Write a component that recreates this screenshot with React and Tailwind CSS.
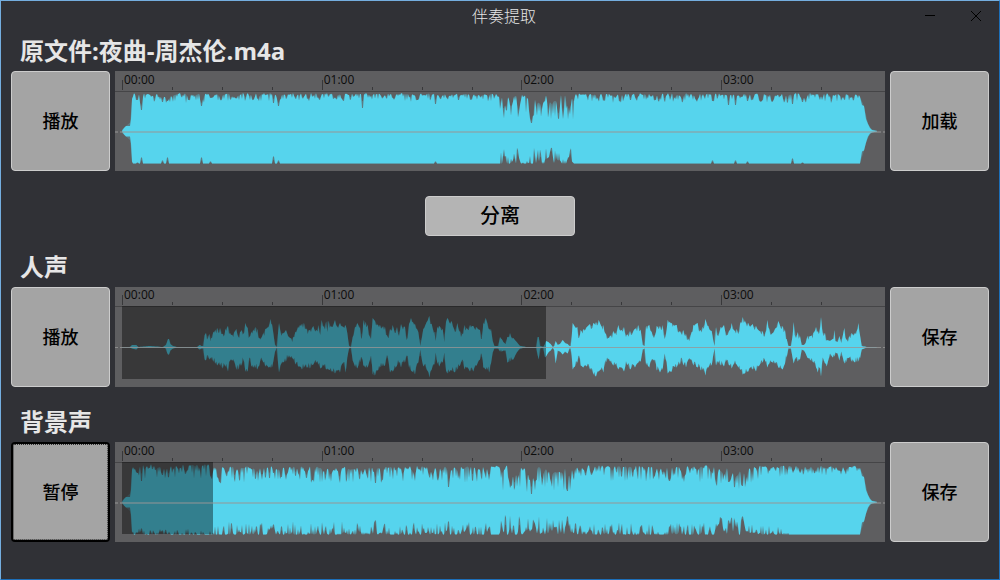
import React, { useState } from 'react';

const CENTER = 60;
const WIDTH = 770;
const START = 7;
const MINUTES = ['00:00', '01:00', '02:00', '03:00'];
// The labels share the ruler's width less its left padding.
const MINUTE_SHARE = 199.7 / 761;

const noise = (n) => {
  const v = Math.sin(n * 127.1 + 11.7) * 43758.5453;
  return v - Math.floor(v);
};

// Each stretch starts at `from`; peaks are [third of a unit, height above, height below].
const VOCAL_PEAKS = [
  {
    from: -115,
    peaks: [
      [366, 0, 0], [390, 0, 0], [396, 2, 1], [409, 2, 2], [415, 0, 0], [450, 1, 0], [488, 0, 0], [498, 2, 1], [501, 5, 5], [504, 8, 7], [507, 8, 7], [511, 3, 3], [519, 1, 1], [530, 0, 0],
      [592, 0, 0], [599, 2, 2], [604, 1, 1], [610, 1, 1], [614, 12, 12], [618, 14, 13], [624, 9, 8], [628, 13, 12], [633, 9, 11], [640, 15, 14], [646, 17, 16], [652, 19, 18], [660, 19, 18],
      [664, 13, 15], [668, 13, 21], [676, 18, 19], [684, 21, 24], [690, 14, 13], [697, 12, 13], [703, 15, 14], [709, 18, 22], [715, 10, 22], [720, 15, 18], [725, 17, 18], [730, 13, 12],
      [736, 24, 24], [743, 19, 24], [748, 10, 10], [754, 15, 19], [760, 17, 20], [766, 20, 20], [772, 18, 22], [778, 9, 18], [784, 9, 10], [790, 14, 15], [796, 18, 19], [806, 20, 20], [811, 28, 20],
      [816, 23, 20], [820, 14, 14], [825, 2, 4], [831, 0, 0], [834, 14, 15], [837, 24, 25], [841, 16, 18], [849, 14, 15], [858, 17, 14], [864, 11, 10], [871, 9, 10], [880, 10, 12], [886, 15, 17], [894, 20, 19],
    ],
  },
  {
    from: 185,
    peaks: [
      [0, 22, 19], [6, 23, 22], [12, 24, 20], [20, 18, 20], [30, 17, 21], [40, 21, 17], [50, 17, 15], [55, 22, 17], [61, 12, 21], [65, 27, 20], [72, 20, 18], [78, 25, 22], [82, 15, 21], [86, 26, 22], [95, 20, 24],
      [105, 27, 26], [112, 20, 23], [120, 24, 25], [130, 20, 15], [137, 22, 25], [142, 14, 10], [147, 1, 1], [153, 0, 0], [158, 10, 13], [165, 20, 19], [172, 24, 21], [180, 20, 15], [185, 8, 10], [190, 27, 18],
      [196, 25, 20], [203, 22, 20], [210, 10, 12], [213, 8, 8], [218, 29, 27], [225, 26, 28], [240, 22, 20], [255, 20, 18], [263, 10, 9], [270, 18, 25], [278, 22, 24], [287, 14, 20], [291, 20, 18], [297, 11, 15],
      [303, 23, 20], [315, 20, 15], [320, 7, 8], [327, 23, 20], [333, 29, 23], [345, 23, 27], [355, 15, 15], [361, 1, 2], [366, 10, 13], [370, 18, 19], [380, 25, 22], [388, 31, 30], [395, 23, 22], [403, 15, 17],
      [407, 6, 5], [412, 20, 16], [418, 21, 19], [428, 18, 15], [433, 5, 5], [438, 25, 23], [442, 29, 26], [455, 26, 23], [465, 15, 25], [472, 24, 22], [480, 16, 18], [487, 13, 12], [493, 22, 22], [500, 19, 20],
      [510, 22, 24], [520, 21, 24], [530, 20, 18], [540, 17, 12], [545, 8, 7], [550, 24, 20], [557, 29, 22], [562, 24, 22], [568, 18, 25], [573, 18, 16], [578, 6, 5], [583, 1, 1], [595, 1, 1], [600, 10, 4],
      [605, 8, 4], [610, 5, 3], [617, 3, 3], [622, 10, 15], [630, 14, 14], [640, 9, 12], [650, 5, 5], [660, 1, 1], [680, 0, 0], [709, 0, 0], [713, 10, 8], [716, 10, 12], [720, 1, 1], [730, 0, 0], [735, 3, 10],
      [738, 6, 9], [745, 5, 5], [752, 3, 3], [758, 0, 0], [763, 1, 3], [767, 6, 16], [773, 2, 3], [780, 3, 4], [788, 7, 7], [795, 4, 4], [803, 3, 6], [808, 1, 1], [812, 1, 1], [815, 10, 8], [818, 24, 22],
      [825, 20, 19], [832, 20, 15], [837, 9, 8], [842, 17, 18], [850, 18, 20], [860, 20, 19], [870, 23, 22], [877, 19, 22], [880, 24, 27], [888, 25, 29], [896, 27, 24], [902, 22, 22], [910, 22, 25],
    ],
  },
  {
    from: 485,
    peaks: [
      [18, 13, 15], [30, 11, 14], [40, 16, 18], [46, 14, 17], [55, 22, 22], [65, 17, 20], [72, 20, 24], [80, 12, 16], [90, 16, 22], [105, 18, 20], [115, 22, 15], [122, 17, 14], [128, 2, 2], [134, 1, 1],
      [138, 21, 17], [148, 22, 20], [155, 15, 12], [162, 9, 13], [170, 21, 23], [180, 21, 25], [188, 22, 22], [194, 8, 6], [203, 27, 26], [215, 24, 24], [230, 22, 20], [240, 16, 17], [246, 12, 11], [250, 17, 18],
      [258, 13, 20], [265, 8, 12], [272, 12, 12], [280, 22, 18], [293, 24, 20], [302, 17, 23], [308, 20, 22], [316, 28, 28], [325, 21, 20], [335, 16, 18], [340, 6, 7], [344, 1, 1], [348, 20, 18], [355, 11, 15],
      [362, 20, 18], [372, 22, 19], [380, 12, 13], [387, 16, 18], [395, 24, 21], [402, 17, 16], [410, 18, 17], [415, 13, 20], [420, 23, 22], [428, 30, 27], [435, 26, 26], [445, 24, 24], [458, 23, 22], [468, 21, 24],
      [478, 16, 18], [488, 16, 15], [496, 14, 14], [502, 27, 20], [508, 18, 16], [518, 14, 15], [525, 18, 16], [535, 26, 20], [548, 21, 22], [555, 17, 16], [560, 8, 10], [565, 1, 1], [573, 1, 1], [578, 12, 11],
      [581, 25, 16], [584, 12, 12], [588, 9, 10], [593, 15, 14], [600, 11, 12], [605, 2, 2], [612, 2, 3], [617, 4, 6], [622, 11, 10], [632, 11, 13], [640, 14, 15], [648, 20, 20], [653, 16, 25], [658, 14, 20],
      [663, 30, 29], [668, 14, 10], [675, 14, 16], [680, 7, 19], [690, 6, 6], [698, 8, 10], [703, 17, 9], [706, 6, 5], [713, 5, 6], [718, 11, 13], [724, 4, 4], [733, 19, 16], [738, 8, 15], [748, 11, 10],
      [755, 14, 14], [765, 14, 15], [770, 16, 14], [775, 24, 14], [780, 12, 11], [785, 1, 2], [800, 0, 0], [830, 0, 0],
    ],
  },
];

// Stretches of the loud tracks: [end, least dip, extra dip at the top, extra dip at the bottom].
const SONG_STRETCHES = [[98, 0, 9, 1], [385, 0, 7, 0], [406, 1, 24, 17], [411, 1, 6, 2], [459, 1, 25, 17], [745, 0, 9, 0]];
const BACKING_STRETCHES = [[98, 0, 14, 7], [376, 2, 16, 14], [385, 1, 2, 0], [406, 1, 26, 22], [411, 2, 9, 5], [459, 1, 26, 22], [600, 1, 16, 13], [640, 2, 22, 20], [675, 1, 14, 10], [745, 1, 9, 1]];

const SONG_DIPS = [
  [22, 8, 1], [26, 18, 6], [47, 10, 3], [52, 9, 6], [73, 8, 0], [86, 14, 6], [95, 6, 2], [158, 11, 7], [163, 14, 3], [247, 16, 0], [302, 8, 0], [320, 12, 2], [343, 8, 0], [416, 31, 0],
  [515, 8, 0], [540, 8, 0], [597, 9, 3], [613, 13, 0], [620, 13, 3], [632, 9, 2], [677, 12, 5], [687, 10, 1],
];
const BACKING_DIPS = [[22, 10, 2], [26, 18, 6], [47, 12, 4], [158, 10, 10], [166, 14, 8], [260, 20, 14], [333, 24, 13], [416, 31, 5], [452, 28, 18], [554, 18, 8], [613, 19, 14], [627, 23, 18]];

const HEAD = [[7, 0, 0], [9, 3, 3], [11, 5, 5], [15, 5, 5], [16, 12, 12], [17, 32, 30]];
const TAIL = [[745, 34, 32], [747, 26, 20], [749, 25, 19], [751, 12, 11], [753, 7, 5], [755, 3, 2], [757, 1, 1], [762, 0, 0]];

const loudPeaks = (stretches, dips, seed) => {
  const body = [];
  for (let x = 18; x < 745; x++) {
    const [, least, top, bottom] = stretches.find(([end]) => x < end);
    const sharpness = top > 20 ? 1 : 1.8;
    const ragged = Math.pow(noise(x * 1.37 + seed), sharpness);
    const up = 38 - least - top * ragged - 2 * noise(x * 3.11 + seed);
    const down = 33 - bottom * Math.pow(noise(x * 2.53 + seed), sharpness + 0.4);
    const dip = dips.find(([at]) => at === x || at === x - 1);
    body.push(dip ? [x, 39 - dip[1], 32 - dip[2]] : [x, up, Math.min(32, down)]);
  }
  return [...HEAD, ...body, ...TAIL];
};

// Fills in the gaps between the noted peaks with one slightly ragged column per unit.
const vocalPeaks = () => {
  const keys = VOCAL_PEAKS.flatMap(({ from, peaks }) => peaks.map(([t, up, down]) => [from + t / 3, up, down]));
  const columns = [];
  keys.forEach(([x, up, down], i) => {
    columns.push([x, up, down]);
    const next = keys[i + 1];
    if (!next) return;
    for (let c = x + 1; c < next[0] - 0.5; c++) {
      const k = (c - x) / (next[0] - x);
      const rough = Math.min(up, next[1]) > 6 ? 5 : 0;
      columns.push([c, up + (next[1] - up) * k - rough * noise(c), down + (next[2] - down) * k - rough * noise(c + 5)]);
    }
  });
  return columns;
};

const toPath = (peaks, center) => {
  const above = peaks.map(([x, up]) => `${x.toFixed(1)},${(center - up).toFixed(1)}`);
  const below = peaks.map(([x, , down]) => `${x.toFixed(1)},${(center + down + 0.5).toFixed(1)}`).reverse();
  return `M${above.join('L')}L${below.join('L')}Z`;
};

// Faint outline behind the wave: every dip is filled part of the way up to its neighbours.
const soften = (peaks) => peaks.map(([x, up, down], i) => {
  const before = peaks[i - 1] || peaks[i];
  const after = peaks[i + 1] || peaks[i];
  return [x, Math.max(up, (before[1] + after[1]) / 2), Math.max(down, (before[2] + after[2]) / 2)];
});

const TRACKS = {
  song: { peaks: loudPeaks(SONG_STRETCHES, SONG_DIPS, 3), ruler: 20, axis: 2, played: 0 },
  vocals: { peaks: vocalPeaks(), ruler: 19, axis: 1, played: 424 },
  backing: { peaks: loudPeaks(BACKING_STRETCHES, BACKING_DIPS, 41), ruler: 20, axis: 2, played: 91 },
};

const Waveform = ({ track, label }) => {
  const { peaks, ruler, axis, played } = track;
  return (
    <div className="relative h-full min-w-0 flex-1 bg-[#5e5e60]">
      <svg className="block h-full w-full" viewBox={`0 0 ${WIDTH} 100`} preserveAspectRatio="none" role="img" aria-label={label}>
        <rect x="0" y={ruler} width={WIDTH} height="1" fill="#454547" />
        {Array.from({ length: 15 }, (_, i) => (
          <rect key={i} x={START + i * 50 - (i > 7 ? 1 : 0)} y={i % 4 ? ruler - 4 : ruler - 11} width="1" height={i % 4 ? 3 : 10} fill="#38383a" />
        ))}
        <path d={toPath(soften(peaks), CENTER)} fill="#56d4ed" opacity="0.25" />
        <path d={toPath(peaks, CENTER)} fill="#56d4ed" />
        {played > 0 && <rect x={START} y={ruler} width={played} height={axis === 1 ? 73 : 72} fill="#000" opacity="0.4" />}
        <path d="M0 0H3M5 0H766M768 0H770" transform={`translate(0 ${axis === 1 ? 60.5 : 61})`} stroke="#969696" strokeOpacity={axis === 1 ? 0.8 : 0.5} strokeWidth={axis} />
      </svg>
      <div className={`absolute inset-x-0 top-0 flex overflow-hidden pl-[9px] font-['Open_Sans',sans-serif] text-xs text-[#0c0c0c] ${axis === 1 ? '' : 'pt-px'}`}>
        {MINUTES.map((time) => (
          <span key={time} className="shrink-0" style={{ width: `${MINUTE_SHARE * 100}%` }}>{time}</span>
        ))}
      </div>
    </div>
  );
};

const SquareButton = ({ children, focused, onClick }) => (
  <button
    type="button"
    onClick={onClick}
    className={`h-full w-[99px] shrink-0 cursor-pointer rounded bg-[#a4a4a4] text-lg font-medium text-black hover:bg-[#b4b4b4] ${focused ? 'border-2 border-black outline-1 -outline-offset-3 outline-dotted outline-[#303030]' : 'border border-[#cccccc]'}`}
  >
    {children}
  </button>
);

const TrackSection = ({ title, track, action, initialPlaying = false }) => {
  const [playing, setPlaying] = useState(initialPlaying);

  return (
    <section>
      <h2 className="flex h-10 items-center px-[9px] text-2xl font-bold text-[#e6e6e6]">{title}</h2>
      <div className="flex h-[100px] gap-[5px]">
        <SquareButton focused={playing} onClick={() => setPlaying(!playing)}>{playing ? '暂停' : '播放'}</SquareButton>
        <Waveform track={track} label={title} />
        <SquareButton>{action}</SquareButton>
      </div>
    </section>
  );
};

const TitleBar = () => (
  <header className="flex h-[30px] items-center text-black">
    <div className="w-[100px] shrink-0" />
    <h1 className="flex-1 text-center text-base font-light text-[#e6e6e6]">伴奏提取</h1>
    <button type="button" aria-label="最小化" className="flex h-full w-[46px] items-center justify-center">
      <svg width="10" height="10" viewBox="0 0 10 10" stroke="currentColor"><path d="M0 4.5H10" /></svg>
    </button>
    <button type="button" aria-label="关闭" className="flex h-full w-[46px] items-center justify-center">
      <svg width="10" height="10" viewBox="0 0 10 10" stroke="currentColor"><path d="M0 0L10 10M10 0L0 10" /></svg>
    </button>
  </header>
);

export default function App() {
  return (
    <div className="min-h-screen border border-t-[#74aedf] border-r-[#1c6eb8] border-b-[#1c6eb8] border-l-[#74aedf] bg-[#303136] font-['Open_Sans','Noto_Sans_CJK_SC',sans-serif]">
      <TitleBar />
      <main className="px-2.5">
        <TrackSection title="原文件:夜曲-周杰伦.m4a" track={TRACKS.song} action="加载" />
        <div className="mt-[25px] mb-[11px] flex justify-center">
          <button type="button" className="h-10 w-[150px] cursor-pointer rounded border border-[#cccccc] bg-[#b4b4b4] text-xl font-medium text-black">分离</button>
        </div>
        <TrackSection title="人声" track={TRACKS.vocals} action="保存" />
        <div className="mt-[15px]">
          <TrackSection title="背景声" track={TRACKS.backing} action="保存" initialPlaying />
        </div>
      </main>
    </div>
  );
}
